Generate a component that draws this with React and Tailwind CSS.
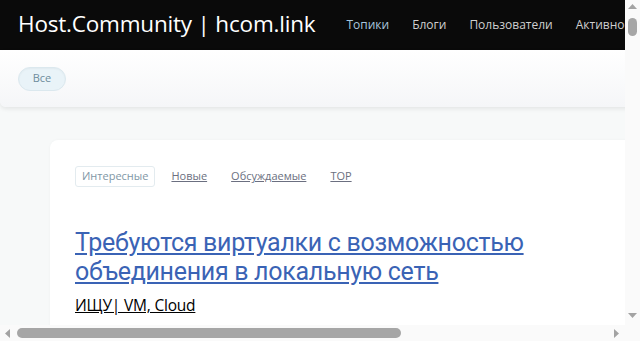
import { useState } from "react";

const navItems = ["Топики", "Блоги", "Пользователи", "Активность", "Поиск"];
const tabs = ["Интересные", "Новые", "Обсуждаемые", "TOP"];

const posts = [
  {
    title: "Требуются виртуалки с возможностью объединения в локальную сеть",
    tags: "ИЩУ| VM, Cloud",
  },
  {
    title: "Ищу хостинг с поддержкой PHP 8 и бесплатным SSL",
    tags: "ИЩУ| Shared hosting",
  },
];

const VScrollbar = () => (
  <div className="w-[15px] bg-[#fafafa] flex flex-col items-center pt-[4px] pb-[7px]">
    <svg width="9" height="5" viewBox="0 0 9 5"><path d="M0 5 L4.5 0 L9 5 Z" fill="#a3a3a3" /></svg>
    <div className="mt-[9px] w-[9px] h-[18px] rounded-full bg-[#a6a6a6]" />
    <div className="flex-1" />
    <svg width="9" height="5" viewBox="0 0 9 5"><path d="M0 0 L9 0 L4.5 5 Z" fill="#a3a3a3" /></svg>
  </div>
);

const HScrollbar = () => (
  <div className="h-[16px] flex bg-[#fafafa]">
    <div className="flex-1 flex items-center pl-[5px] pr-[6px]">
      <svg width="5" height="9" viewBox="0 0 5 9"><path d="M5 0 L0 4.5 L5 9 Z" fill="#a3a3a3" /></svg>
      <div className="ml-[7px] w-[384px] h-[10px] rounded-full bg-[#a6a6a6]" />
      <div className="flex-1" />
      <svg width="5" height="9" viewBox="0 0 5 9"><path d="M0 0 L5 4.5 L0 9 Z" fill="#a3a3a3" /></svg>
    </div>
    <div className="w-[15px] bg-[#fafafa]" />
  </div>
);

const App = () => {
  const [activeTab, setActiveTab] = useState("Интересные");

  return (
    <div className="w-[640px] h-[341px] flex flex-col overflow-hidden bg-white">
      <div className="flex-1 flex min-h-0">
        <div className="flex-1 overflow-hidden">
          <div className="w-[975px] min-h-[1800px] bg-[#f7f9f9] font-['Open_Sans',sans-serif]">
            {/* Header */}
            <header className="h-[50px] bg-[#0a0a0a] flex items-center pl-[18px]">
              <a className="text-white text-[22.5px] leading-none tracking-[-0.2px] mr-[31px] pb-[2px]">Host.Community | hcom.link</a>
              <nav className="flex items-center gap-[23px] text-[12px]">
                {navItems.map((item, i) => (
                  <a key={item} className={i === 0 ? "text-[#a9c6dd]" : "text-[#cfcfcf]"}>
                    {item}
                  </a>
                ))}
              </nav>
            </header>

            {/* Filter bar */}
            <div className="h-[57px] bg-gradient-to-b from-white to-[#f5f6f8] shadow-[0_2px_4px_rgba(0,0,0,0.08)] rounded-b-[6px] flex items-center pl-[18px]">
              <span className="h-[24px] w-[48px] rounded-full bg-[#e9f3f8] border border-[#dbe8ee] shadow-[inset_0_1px_2px_rgba(0,0,0,0.04)] flex items-center justify-center text-[11px] text-[#6e8c9c]">
                Все
              </span>
            </div>

            {/* Content */}
            <main className="pt-[33px] pl-[50px]">
              <div className="bg-white rounded-tl-[8px] shadow-[0_0_3px_rgba(0,0,0,0.04)] pt-[26px] pl-[25px] min-h-[1500px]">
                <div className="flex items-center gap-[17px] text-[11px] mb-[41px]">
                  {tabs.map((tab) =>
                    tab === activeTab ? (
                      <button key={tab} onClick={() => setActiveTab(tab)} className="h-[21px] px-[6px] border border-[#e3ebef] rounded-[3px] text-[#7f97a6] mr-[-1px]">
                        {tab}
                      </button>
                    ) : (
                      <button key={tab} onClick={() => setActiveTab(tab)} className="underline text-[#6b6f80] mr-[7px]">
                        {tab}
                      </button>
                    )
                  )}
                </div>

                {posts.map((post) => (
                  <article key={post.title} className="w-[460px] mb-[60px]">
                    <a className="block text-[25px] leading-[29px] tracking-[-0.3px] text-[#3a63b5] underline font-['Roboto',sans-serif]">{post.title}</a>
                    <a className="inline-block mt-[8px] text-[15.5px] tracking-[-0.2px] text-black underline">{post.tags}</a>
                  </article>
                ))}
              </div>
            </main>
          </div>
        </div>
        <VScrollbar />
      </div>
      <HScrollbar />
    </div>
  );
};

export default App;
